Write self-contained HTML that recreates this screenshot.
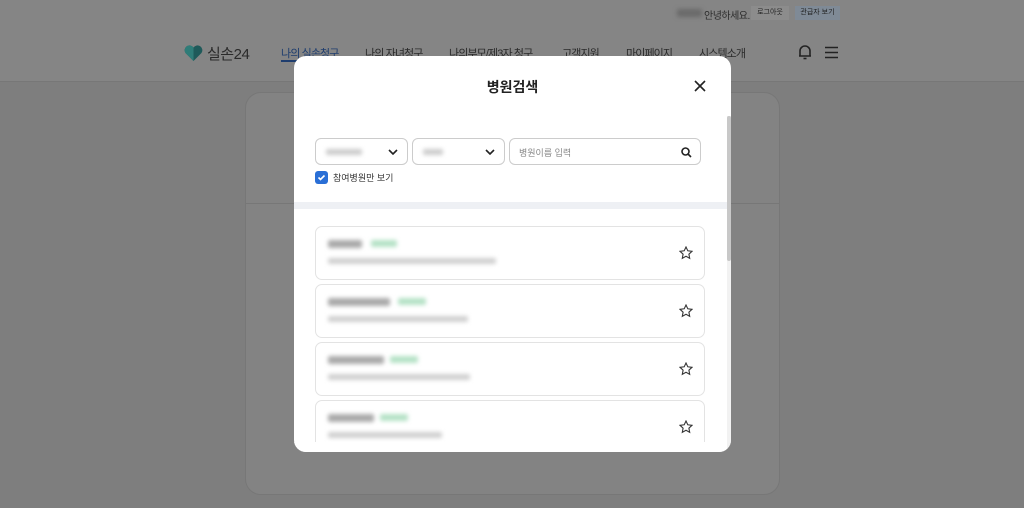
<!DOCTYPE html>
<html><head><meta charset="utf-8"><style>
*{margin:0;padding:0;box-sizing:border-box}
body{width:1024px;height:508px;overflow:hidden;background:#7e7e7e;font-family:"Liberation Sans","Noto Sans CJK KR",sans-serif;position:relative}
.hdr{position:absolute;left:0;top:0;width:1024px;height:82px;background:#858585;border-bottom:1px solid #777}
.t{position:absolute;color:#2a2a2a;font-size:11px;white-space:nowrap}
.nav{position:absolute;top:45px;font-size:11px;letter-spacing:-0.9px;color:#2a2a2a;white-space:nowrap}
.bg-card{position:absolute;left:245px;top:92px;width:535px;height:403px;border-radius:16px;background:#838383;border:1px solid #777}
.modal{position:absolute;left:294px;top:56px;width:437px;height:396px;background:#fff;border-radius:12px;overflow:hidden}
.sel{position:absolute;top:82px;height:27px;border:1px solid #ccc;border-radius:6px;background:#fff}
.blur{position:absolute;background:#bbb;filter:blur(2px);border-radius:2px}
.item{position:absolute;left:21px;width:390px;height:54px;border:1px solid #e3e3e3;border-radius:7px;background:#fff}
</style></head><body>
<div class="hdr"></div>
<div class="blur" style="left:677px;top:9px;width:25px;height:8px;background:#6a6a6a"></div>
<div class="t" style="left:704px;top:7px;font-size:10px;letter-spacing:-0.5px">안녕하세요.</div>
<div style="position:absolute;left:751px;top:6px;width:38px;height:14px;background:#8c8c8c;font-size:7px;color:#222;text-align:center;line-height:14px">로그아웃</div>
<div style="position:absolute;left:795px;top:6px;width:45px;height:14px;background:#7f8a96;font-size:7px;color:#222;text-align:center;line-height:14px">관급자 보기</div>
<svg style="position:absolute;left:184px;top:45px" width="19" height="17" viewBox="0 0 19 17"><path d="M9.5 16 L1.5 8 A4.5 4.5 0 0 1 9.5 2.5 A4.5 4.5 0 0 1 17.5 8 Z" fill="#1f5a5a"/><path d="M9.5 16 L1.5 8 A4.5 4.5 0 0 1 9.5 2.5 Z" fill="#2f7c78"/></svg>
<div class="nav" style="left:207px;top:43px;font-size:15px;letter-spacing:-0.5px">실손24</div>
<div class="nav" style="left:281px;color:#1e3d6e">나의 실손청구</div>
<div style="position:absolute;left:281px;top:60px;width:58px;height:2px;background:#1e3d6e"></div>
<div class="nav" style="left:365px">나의 자녀청구</div>
<div class="nav" style="left:449px">나의부모/제3자 청구</div>
<div class="nav" style="left:562px">고객지원</div>
<div class="nav" style="left:626px">마이페이지</div>
<div class="nav" style="left:699px">시스템소개</div>
<svg style="position:absolute;left:797px;top:44px" width="16" height="17" viewBox="0 0 16 17" fill="none" stroke="#222" stroke-width="1.6"><path d="M3 12 V7 a5 5 0 0 1 10 0 V12 H2 h12"/><path d="M6.5 14.5 h3"/></svg>
<svg style="position:absolute;left:824px;top:46px" width="15" height="13" viewBox="0 0 15 13" stroke="#222" stroke-width="1.6"><path d="M1 1.5h13M1 6.5h13M1 11.5h13"/></svg>
<div class="bg-card"><div style="position:absolute;left:0;top:110px;width:100%;height:1px;background:#777"></div></div>
<div class="modal">
 <div style="position:absolute;left:0;width:100%;top:21px;text-align:center;font-size:14px;font-weight:bold;color:#222">병원검색</div>
 <svg style="position:absolute;left:400px;top:24px" width="12" height="12" viewBox="0 0 12 12" stroke="#222" stroke-width="1.6"><path d="M1 1L11 11M11 1L1 11"/></svg>
 <div class="sel" style="left:21px;width:93px"><div class="blur" style="left:10px;top:10px;width:36px;height:6px;background:#ccc"></div><svg style="position:absolute;left:72px;top:10px" width="10" height="6" viewBox="0 0 10 6" fill="none" stroke="#222" stroke-width="1.6"><path d="M1 1l4 4 4-4"/></svg></div>
 <div class="sel" style="left:118px;width:93px"><div class="blur" style="left:10px;top:10px;width:20px;height:6px;background:#ccc"></div><svg style="position:absolute;left:72px;top:10px" width="10" height="6" viewBox="0 0 10 6" fill="none" stroke="#222" stroke-width="1.6"><path d="M1 1l4 4 4-4"/></svg></div>
 <div class="sel" style="left:215px;width:192px"><span style="position:absolute;left:9px;top:7px;font-size:9px;color:#888">병원이름 입력</span><svg style="position:absolute;left:171px;top:8px" width="11" height="11" viewBox="0 0 11 11" fill="none" stroke="#222" stroke-width="1.6"><circle cx="4.5" cy="4.5" r="3.5"/><path d="M7 7l3 3"/></svg></div>
 <div style="position:absolute;left:21px;top:115px;width:13px;height:13px;border-radius:3px;background:#2a6fd6"><svg width="13" height="13" viewBox="0 0 13 13" fill="none" stroke="#fff" stroke-width="1.6"><path d="M3.5 6.5l2 2 4-4"/></svg></div>
 <div style="position:absolute;left:39px;top:115px;font-size:9px;color:#333">참여병원만 보기</div>
 <div style="position:absolute;left:0;top:146px;width:433px;height:7px;background:#eef0f4"></div>
 <div style="position:absolute;left:433px;top:60px;width:4px;height:336px;background:#f2f2f2"><div style="width:4px;height:145px;background:#c8c8c8;border-radius:2px"></div></div>
 <div class="item" style="top:170px"><div class="blur" style="left:12px;top:13px;width:34px;height:8px;background:#aaa"></div><div class="blur" style="left:55px;top:13px;width:26px;height:7px;background:#b5e2c6"></div><div class="blur" style="left:12px;top:31px;width:168px;height:6px;background:#d0d0d0"></div></div>
 <div class="item" style="top:228px"><div class="blur" style="left:12px;top:13px;width:62px;height:8px;background:#aaa"></div><div class="blur" style="left:82px;top:13px;width:28px;height:7px;background:#b5e2c6"></div><div class="blur" style="left:12px;top:31px;width:140px;height:6px;background:#d0d0d0"></div></div>
 <div class="item" style="top:286px"><div class="blur" style="left:12px;top:13px;width:56px;height:8px;background:#aaa"></div><div class="blur" style="left:74px;top:13px;width:28px;height:7px;background:#b5e2c6"></div><div class="blur" style="left:12px;top:31px;width:142px;height:6px;background:#d0d0d0"></div></div>
 <div class="item" style="top:344px"><div class="blur" style="left:12px;top:13px;width:46px;height:8px;background:#aaa"></div><div class="blur" style="left:64px;top:13px;width:28px;height:7px;background:#b5e2c6"></div><div class="blur" style="left:12px;top:31px;width:114px;height:6px;background:#d0d0d0"></div></div>
 <svg style="position:absolute;left:385px;top:190px" width="14" height="14" viewBox="0 0 14 14" fill="none" stroke="#333" stroke-width="1.1"><path d="M7 1l1.8 3.8 4.2.5-3.1 2.9.8 4.1L7 10.3 3.3 12.3l.8-4.1L1 5.3l4.2-.5z"/></svg>
 <svg style="position:absolute;left:385px;top:248px" width="14" height="14" viewBox="0 0 14 14" fill="none" stroke="#333" stroke-width="1.1"><path d="M7 1l1.8 3.8 4.2.5-3.1 2.9.8 4.1L7 10.3 3.3 12.3l.8-4.1L1 5.3l4.2-.5z"/></svg>
 <svg style="position:absolute;left:385px;top:306px" width="14" height="14" viewBox="0 0 14 14" fill="none" stroke="#333" stroke-width="1.1"><path d="M7 1l1.8 3.8 4.2.5-3.1 2.9.8 4.1L7 10.3 3.3 12.3l.8-4.1L1 5.3l4.2-.5z"/></svg>
 <svg style="position:absolute;left:385px;top:364px" width="14" height="14" viewBox="0 0 14 14" fill="none" stroke="#333" stroke-width="1.1"><path d="M7 1l1.8 3.8 4.2.5-3.1 2.9.8 4.1L7 10.3 3.3 12.3l.8-4.1L1 5.3l4.2-.5z"/></svg>
 <div style="position:absolute;left:0;top:386px;width:433px;height:10px;background:#fff"></div>
</div>
</body></html>
